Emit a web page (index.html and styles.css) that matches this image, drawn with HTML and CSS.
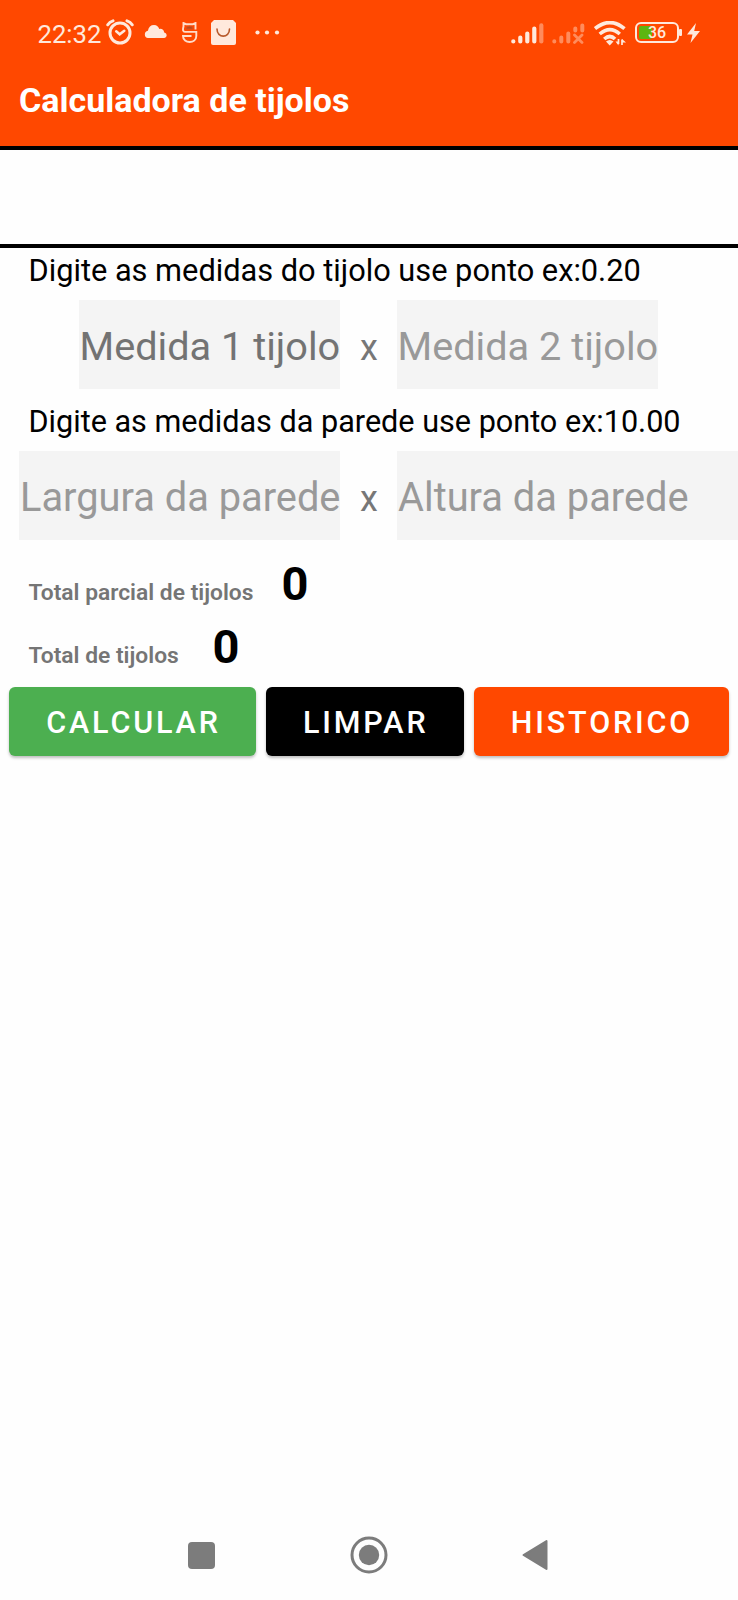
FILE: index.html
```html
<!DOCTYPE html>
<html lang="pt-BR">
<head>
<meta charset="utf-8">
<title>Calculadora de tijolos</title>
<link rel="stylesheet" href="styles.css">
</head>
<body>
<div class="screen">
  <header class="header">
    <div class="status">
      <span class="clock">22:32</span>
      <svg class="i-alarm" width="28" height="26" viewBox="0 0 28 26" fill="none" stroke="#ffe9dc" stroke-linecap="round"><circle cx="14" cy="14" r="10" stroke-width="3"/><path d="M1.800 5.800Q3.500 3 7 1.800M26.200 5.800Q24.500 3 21 1.800" stroke-width="3"/><path d="M10.200 12.300 13.700 15.300 18.300 11.700" stroke-width="2.500"/></svg>
      <svg class="i-cloud" width="23" height="13" viewBox="0 0 23 13" fill="#ffe9dc"><path d="M4 13A3.700 3.700 0 0 1 3.900 5.700Q5 0 10 0C13 0 14.500 2 15.300 3.900Q19.500 3.300 20.200 7.400C23.600 8 23.400 13 20 13Z"/></svg>
      <svg class="i-s" width="17" height="22" viewBox="0 0 17 22" fill="none" stroke="#ffdcc9" stroke-width="1.900"><path d="M14.500 7.500V1L12 2.200H5L2.500 1V4.500Q1 9.900 4 9.900H15.300V14C15.300 22 2 22 2 14H10.500"/><path d="M5 7Q5 4.200 8.500 4.200T12 7Z" fill="#b94a1c" stroke="#d9501c" stroke-width="1"/></svg>
      <svg class="i-bag" width="25" height="25" viewBox="0 0 25 25"><path d="M3 0H22L25 3V23Q25 25 23 25H2Q0 25 0 23V3Z" fill="#ffe9dc"/><path d="M6 9C6 18.500 18.500 18.500 18.500 9" fill="none" stroke="#b85a2c" stroke-width="1.600" stroke-linecap="round"/></svg>
      <svg class="i-dots" width="25" height="5" viewBox="0 0 25 5" fill="#ffe9dc"><circle cx="2.500" cy="2.500" r="2.100"/><circle cx="12" cy="2.500" r="2.100"/><circle cx="22" cy="2.500" r="2.100"/></svg>
      <svg class="i-signal" width="33" height="21" viewBox="0 0 33 21" stroke="#ffe9dc" stroke-width="4.200" stroke-linecap="round"><path d="M2.300 18.500V18.300M9.300 18.500V14.500M16.300 18.500V10.500M23.300 18.500V5.500"/><path d="M30.300 18.500V2.400" opacity=".42"/></svg>
      <svg class="i-nosim" width="33" height="21" viewBox="0 0 33 21" fill="none" stroke="#ff8c5c" stroke-width="4" stroke-linecap="round"><path d="M2.300 18.500V18.300M9.300 18.500V14.500M16.300 18.500V10.500M23.300 7.500V5.500M30.300 7.500V2.400"/><path d="M22.500 12 30 19.500M30 12 22.500 19.500" stroke-width="2.800"/></svg>
      <svg class="i-wifi" width="33" height="25" viewBox="0 0 33 25" fill="none" stroke="#ffe9dc" stroke-width="3.600"><path d="M1 7.600Q16 -4.500 30.500 7.600M5.700 13Q16 4.200 25.800 13M10.200 18Q16 13 21 18"/><path d="M12 20.500Q15.800 17.500 19.500 20.500L15.700 24.500Z" fill="#ffe9dc" stroke="none"/><path d="M24.500 18V23M28 24V18.500" stroke-width="1.700"/><path d="M21.500 20.500H24.500V24.500ZM28 18 32 21.500H28Z" fill="#ffe9dc" stroke="none"/></svg>
      <span class="battery"><span class="charge"></span><span class="percent">36</span></span>
      <svg class="i-bolt" width="13" height="20" viewBox="0 0 13 20" fill="#ffe9dc"><path d="M9 0 0 11.500H5.500L3.500 20 13 8H7.200Z"/></svg>
    </div>
    <h1 class="title">Calculadora de tijolos</h1>
  </header>
  <div class="banner"></div>
  <main>
    <p class="label first">Digite as medidas do tijolo use ponto ex:0.20</p>
    <div class="pair brick">
      <div class="field active">Medida 1 tijolo</div><span class="times">x</span><div class="field">Medida 2 tijolo</div>
    </div>
    <p class="label second">Digite as medidas da parede use ponto ex:10.00</p>
    <div class="pair wall">
      <div class="field">Largura da parede</div><span class="times">x</span><div class="field">Altura da parede</div>
    </div>
    <div class="total partial"><span class="name">Total parcial de tijolos</span><b class="value">0</b></div>
    <div class="total final"><span class="name">Total de tijolos</span><b class="value">0</b></div>
    <div class="buttons">
      <button class="btn green">CALCULAR</button>
      <button class="btn black">LIMPAR</button>
      <button class="btn orange">HISTORICO</button>
    </div>
  </main>
  <nav class="nav">
    <svg width="27" height="27" viewBox="0 0 27 27"><rect width="27" height="27" rx="4" fill="#7c7c7c"/></svg>
    <svg width="38" height="38" viewBox="0 0 38 38"><circle cx="19" cy="19" r="17" fill="none" stroke="#7c7c7c" stroke-width="3"/><circle cx="19" cy="19" r="10.200" fill="#7c7c7c"/></svg>
    <svg width="26" height="32" viewBox="0 0 26 32"><path d="M1.500 16 24.500 2V30Z" fill="#7c7c7c" stroke="#7c7c7c" stroke-width="2" stroke-linejoin="round"/></svg>
  </nav>
</div>
</body>
</html>
```
FILE: styles.css
```css
* { box-sizing: border-box; }
body { margin: 0; background: #fff; font-family: Roboto, sans-serif; }
.screen { width: 738px; height: 1600px; display: flex; flex-direction: column; overflow: hidden; background: #fefefe; }
.header { height: 150px; background: #ff4800; border-bottom: 4px solid #000; color: #fff; }
.status { height: 66px; padding-left: 37px; display: flex; align-items: center; }
.status > * { flex: none; }
.clock { width: 69px; padding: 1px 0 0 .5px; font-size: 25.700px; line-height: 30px; color: #ffe9dc; white-space: nowrap; }
.i-alarm { margin-bottom: 2px; }
.i-cloud { margin: 0 0 4px 10px; }
.i-s { margin-left: 14px; }
.i-bag { margin: 0 0 1px 13px; }
.i-dots { margin: 0 0 1px 19px; }
.i-signal { margin-left: 231px; }
.i-nosim { margin-left: 8px; }
.i-wifi { margin-left: 9px; }
.battery { position: relative; width: 44px; height: 21px; margin: 0 0 2px 8px; padding: 2px; border: 2px solid #ffe9dc; border-radius: 6px; }
.battery::after { content: ""; position: absolute; right: -5px; top: 5px; width: 3px; height: 7px; border-radius: 1px; background: #ffe9dc; }
.charge { display: block; width: 13px; height: 13px; border-radius: 2px; background: #5cb611; }
.percent { position: absolute; inset: 0; text-align: center; font-size: 16px; line-height: 18px; font-weight: 500; color: #ffe9dc; }
.i-bolt { margin: 0 0 1px 8px; }
.title { margin: 14px 0 0 19px; font-size: 34px; line-height: 40px; font-weight: 700; white-space: nowrap; }
.banner { height: 98px; border-bottom: 4px solid #000; }
main { flex: 1; }
.label { margin: 0 0 0 28.500px; font-size: 30.750px; line-height: 36px; height: 52px; color: #000; white-space: nowrap; }
.first { padding-top: 5px; }
.second { height: 62px; padding-top: 15px; font-size: 30.600px; }
.pair { display: flex; height: 89px; color: #777; font-size: 39.700px; line-height: 46px; }
.field { flex: none; width: 261px; padding: 24px 0 0 .5px; background: #f4f4f4; color: #999; white-space: nowrap; }
.active { color: #737373; }
.times { flex: none; width: 57px; padding: 25px 0 0 1px; text-align: center; font-size: 36px; }
.brick { padding-left: 79px; }
.wall { padding-left: 19px; }
.wall .field { width: 321px; padding-left: 1px; font-size: 39.800px; }
.wall .field:last-child { width: 341px; }
.total { display: flex; align-items: baseline; padding-left: 28.500px; height: 63px; line-height: 54px; }
.partial { margin-top: 17px; }
.name { width: 225px; font-size: 22.800px; font-weight: 600; color: #757575; white-space: nowrap; }
.value { margin-left: 28px; font-size: 47px; color: #000; }
.final .name { width: 151px; }
.final .value { margin-left: 33px; }
.buttons { display: flex; gap: 10px; margin-top: 4px; padding-left: 9px; }
.btn { height: 69px; padding: 3px 0 0 2px; border: 0; border-radius: 6px; font: 500 30.500px/36px Roboto, sans-serif; letter-spacing: 2.850px; color: #fff; box-shadow: 0 2px 3px rgba(0,0,0,.25); }
.green { width: 247px; background: #4caf50; }
.black { width: 197.500px; background: #000; }
.orange { width: 255px; background: #ff4800; }
.nav { display: flex; height: 90px; padding-left: 188px; align-items: center; }
.nav svg { flex: none; }
.nav svg:nth-child(2) { margin-left: 135px; }
.nav svg:nth-child(3) { margin-left: 134px; }
```
